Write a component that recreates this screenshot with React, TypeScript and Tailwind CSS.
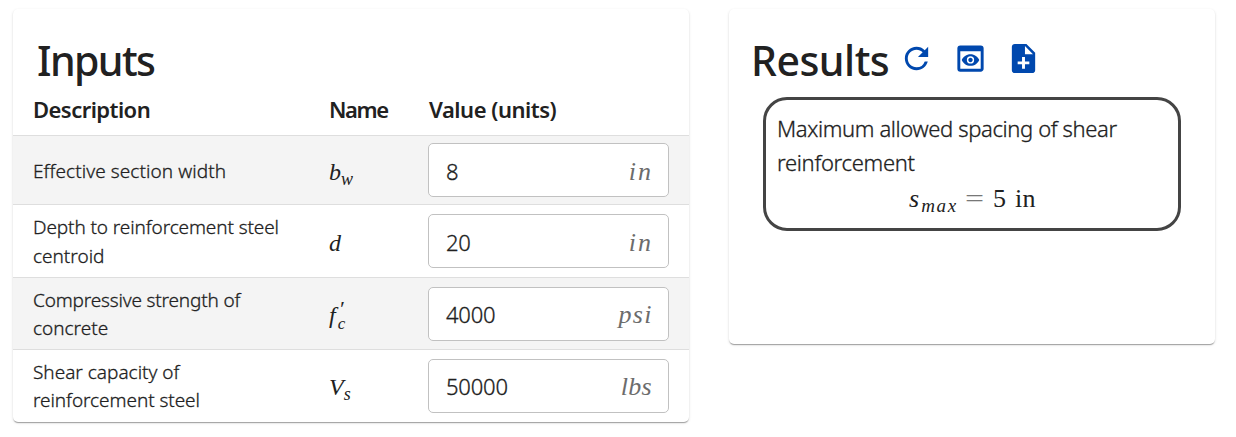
import type { ReactNode } from "react";
import { MdNoteAdd, MdPreview, MdRefresh } from "react-icons/md";

const card =
  "rounded-[5px] bg-white shadow-[0_2px_1px_-1px_rgba(0,0,0,0.2),0_1px_1px_0_rgba(0,0,0,0.14),0_1px_3px_0_rgba(0,0,0,0.12)]";
const math = "font-['Liberation_Serif',serif]";
const book = "font-light [-webkit-text-stroke:0.3px_#212121]";

type Row = {
  lines: { text: string; spacing: string }[];
  name: ReactNode;
  value: string;
  unit: string;
  unitSpacing: string;
  row: string;
};

const rows: Row[] = [
  {
    lines: [{ text: "Effective section width", spacing: "tracking-[0.08px]" }],
    name: (
      <>
        b<sub className="bottom-[-5px] text-[18px]">w</sub>
      </>
    ),
    value: "8",
    unit: "in",
    unitSpacing: "tracking-[2px] -mr-px",
    row: "h-[69px] bg-[#f4f4f4]",
  },
  {
    lines: [
      { text: "Depth to reinforcement steel", spacing: "tracking-[-0.1px]" },
      { text: "centroid", spacing: "tracking-[0px]" },
    ],
    name: "d",
    value: "20",
    unit: "in",
    unitSpacing: "tracking-[2px] -mr-px",
    row: "h-[73px]",
  },
  {
    lines: [
      { text: "Compressive strength of", spacing: "tracking-[-0.17px]" },
      { text: "concrete", spacing: "tracking-[0px]" },
    ],
    name: (
      <span className="flex items-center">
        f
        <span className="ml-[3px] flex flex-col pt-px text-[17px]">
          <span className="h-[15px] text-[22px] leading-[15px]">′</span>
          <span className="-ml-px h-[15px] leading-[15px]">c</span>
        </span>
      </span>
    ),
    value: "4000",
    unit: "psi",
    unitSpacing: "tracking-[1.4px] -mr-px",
    row: "h-[72px] bg-[#f4f4f4]",
  },
  {
    lines: [
      { text: "Shear capacity of", spacing: "tracking-[0px]" },
      { text: "reinforcement steel", spacing: "tracking-[-0.06px]" },
    ],
    name: (
      <>
        V<sub className="bottom-[-5px] text-[18px]">s</sub>
      </>
    ),
    value: "50000",
    unit: "lbs",
    unitSpacing: "tracking-[0.3px]",
    row: "h-[72px]",
  },
];

function InputsCard() {
  return (
    <section className={`${card} h-[413px] w-[676px] overflow-hidden`}>
      <h1 className="h-[80px] pl-[24px] pt-[21px] text-[41px] font-medium leading-[60px] tracking-[-1.6px]">
        Inputs
      </h1>
      <div className="flex h-[46px] pl-5 text-[22px] font-semibold leading-[41px]">
        <span className="w-[296px] tracking-[-0.55px]">Description</span>
        <span className="w-[100px] tracking-[-1.4px]">Name</span>
        <span className="tracking-[-0.48px]">Value (units)</span>
      </div>
      {rows.map((r) => (
        <div key={r.value} className={`flex items-center border-t border-[#dedede] px-5 ${r.row}`}>
          <div className={`w-[296px] pt-[1.5px] text-[19px] leading-[28.4px] ${book}`}>
            {r.lines.map((l) => (
              <div key={l.text} className={`whitespace-nowrap ${l.spacing}`}>
                {l.text}
              </div>
            ))}
          </div>
          <div className={`w-[99px] pt-[3px] text-[24px] italic ${math}`}>{r.name}</div>
          <div className="flex h-[54px] w-[241px] items-center justify-between rounded-[5px] border border-[#c1c1c1] bg-white pl-[17px] pr-4 pt-[2px] text-[22px]">
            <span className={`tracking-[-0.2px] ${book}`}>{r.value}</span>
            <span className={`text-[26px] italic text-[#6c6c6c] ${math} ${r.unitSpacing}`}>{r.unit}</span>
          </div>
        </div>
      ))}
    </section>
  );
}

function ResultsCard() {
  return (
    <section className={`${card} h-[335px] w-[486px]`}>
      <div className="flex h-[88px] items-start pl-[22px] pt-[21px]">
        <h1 className="w-[148px] whitespace-nowrap text-[41px] font-medium leading-[60px] tracking-[-0.5px]">
          Results
        </h1>
        <div className="flex gap-[18.5px] pt-[11px] text-[35px] text-[#0048ae]">
          <MdRefresh />
          <MdPreview />
          <MdNoteAdd />
        </div>
      </div>
      <div className="ml-[34px] h-[134px] w-[418px] rounded-[24px] border-[3px] border-[#444] pl-[11px] pt-[11px]">
        <p className={`text-[22px] leading-[34px] ${book}`}>
          <span className="block whitespace-nowrap tracking-[-0.37px]">Maximum allowed spacing of shear</span>
          <span className="block tracking-[-0.3px]">reinforcement</span>
        </p>
        <div className={`flex items-baseline pl-[132px] pt-[2px] text-[26px] leading-[36px] ${math}`}>
          <i>s</i>
          <sub className="bottom-[-5px] ml-[2px] text-[19px] italic leading-none tracking-[1.7px]">max</sub>
          <span className="ml-[7px] w-5 origin-left scale-x-[1.3] text-[#777]">=</span>
          <span className="ml-[8px]">5</span>
          <span className="ml-[9px] tracking-[0.4px]">in</span>
        </div>
      </div>
    </section>
  );
}

export default function App() {
  return (
    <main className="flex h-[437px] w-[1236px] items-start gap-10 bg-white pl-[13px] pt-[9px] font-['Noto_Sans',sans-serif] text-[#212121]">
      <InputsCard />
      <ResultsCard />
    </main>
  );
}
